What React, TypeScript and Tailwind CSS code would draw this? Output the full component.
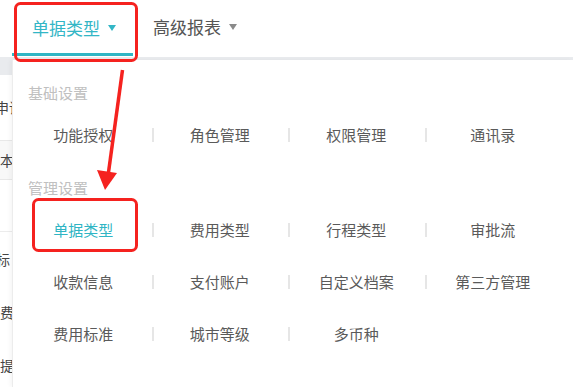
export default function App() {
  const rows: { label?: string; items: { name: string; active?: boolean }[] }[] = [
    { label: '基础设置', items: [{ name: '功能授权' }, { name: '角色管理' }, { name: '权限管理' }, { name: '通讯录' }] },
    { label: '管理设置', items: [{ name: '单据类型', active: true }, { name: '费用类型' }, { name: '行程类型' }, { name: '审批流' }] },
    { items: [{ name: '收款信息' }, { name: '支付账户' }, { name: '自定义档案' }, { name: '第三方管理' }] },
    { items: [{ name: '费用标准' }, { name: '城市等级' }, { name: '多币种' }] },
  ];

  return (
    <div className="relative w-[573px] h-[387px] overflow-hidden bg-white font-['Noto_Sans_CJK_SC','Noto_Sans',sans-serif]">
      {/* Top tabs */}
      <div className="flex h-[57px] items-stretch">
        <div className="ml-[12px] w-[121px] flex flex-col">
          <div className="flex-1 flex items-center pl-[20px] pt-[2px]">
            <span className="text-[17px] leading-none text-[#33b6c6]">单据类型</span>
            <span className="ml-[8px] inline-block w-0 h-0 border-x-[4.5px] border-x-transparent border-t-[6px] border-t-[#33b6c6]" />
          </div>
          <div className="h-[3px] mb-[1px] bg-[#2fb5c4]" />
        </div>
        <div className="flex items-center pl-[20px] pb-[4px]">
          <span className="text-[17px] leading-none text-[#555]">高级报表</span>
          <span className="ml-[8px] inline-block w-0 h-0 border-x-[4.5px] border-x-transparent border-t-[6px] border-t-[#8a8a8a]" />
        </div>
      </div>
      <div className="h-[5px] bg-[#e9ebee]" />

      <div className="flex">
        {/* Page content behind the menu */}
        <div className="w-[12px] h-[325px] overflow-hidden text-[14px] text-[#444] leading-none">
          <div className="h-[13px] bg-[#e9ebee]" />
          <div className="h-[65px] flex items-start pt-[25px] whitespace-nowrap">
            <span className="-ml-[5px]">申请</span>
          </div>
          <div className="h-[40px] bg-[#f8f8f8] border-y border-[#e8e8e8] flex items-center">
            <span>本</span>
          </div>
          <div className="h-[52px] border-b border-[#ececec]" />
          <div className="h-[53px] flex items-center whitespace-nowrap">
            <span className="-ml-[4px]">标</span>
          </div>
          <div className="h-[53px] flex items-center">
            <span>费</span>
          </div>
          <div className="h-[53px] flex items-center">
            <span>提</span>
          </div>
        </div>

        {/* Dropdown panel */}
        <div className="flex-1 -mt-[2px] h-[327px] bg-white border-l border-[#ececec] shadow-[-2px_0_4px_rgba(0,0,0,0.04)] pt-[23px]">
          {rows.map((row, i) => (
            <div key={i}>
              {row.label && (
                <div className={`pl-[15px] h-[20px] leading-[20px] text-[15px] text-[#c0c0c0] ${i > 0 ? 'mt-[17px]' : ''}`}>
                  {row.label}
                </div>
              )}
              <div className={`grid grid-cols-4 w-[546px] ml-[2px] h-[52px] ${row.label ? 'mt-[6px]' : ''}`}>
                {row.items.map((item, j) => (
                  <div key={item.name} className="relative flex items-center justify-center">
                    {j > 0 && <span className="absolute left-0 top-[19px] w-[2px] h-[14px] bg-[#e6e6e6]" />}
                    <span className={`text-[15px] ${item.active ? 'text-[#2fb5c4]' : 'text-[#5a5a5a]'}`}>{item.name}</span>
                  </div>
                ))}
              </div>
            </div>
          ))}
        </div>
      </div>

      {/* Red annotations */}
      <svg className="absolute inset-0 pointer-events-none" width="573" height="387" viewBox="0 0 573 387">
        <rect x="15.5" y="3.5" width="121" height="57" rx="5" fill="none" stroke="#f5221f" strokeWidth="3" />
        <rect x="33.5" y="199.5" width="103" height="51" rx="5" fill="none" stroke="#f5221f" strokeWidth="3" />
        <line x1="122.5" y1="70" x2="108" y2="176" stroke="#f5221f" strokeWidth="3.5" />
        <polygon points="105,190 97,170 117,173" fill="#f5221f" />
      </svg>
    </div>
  );
}
